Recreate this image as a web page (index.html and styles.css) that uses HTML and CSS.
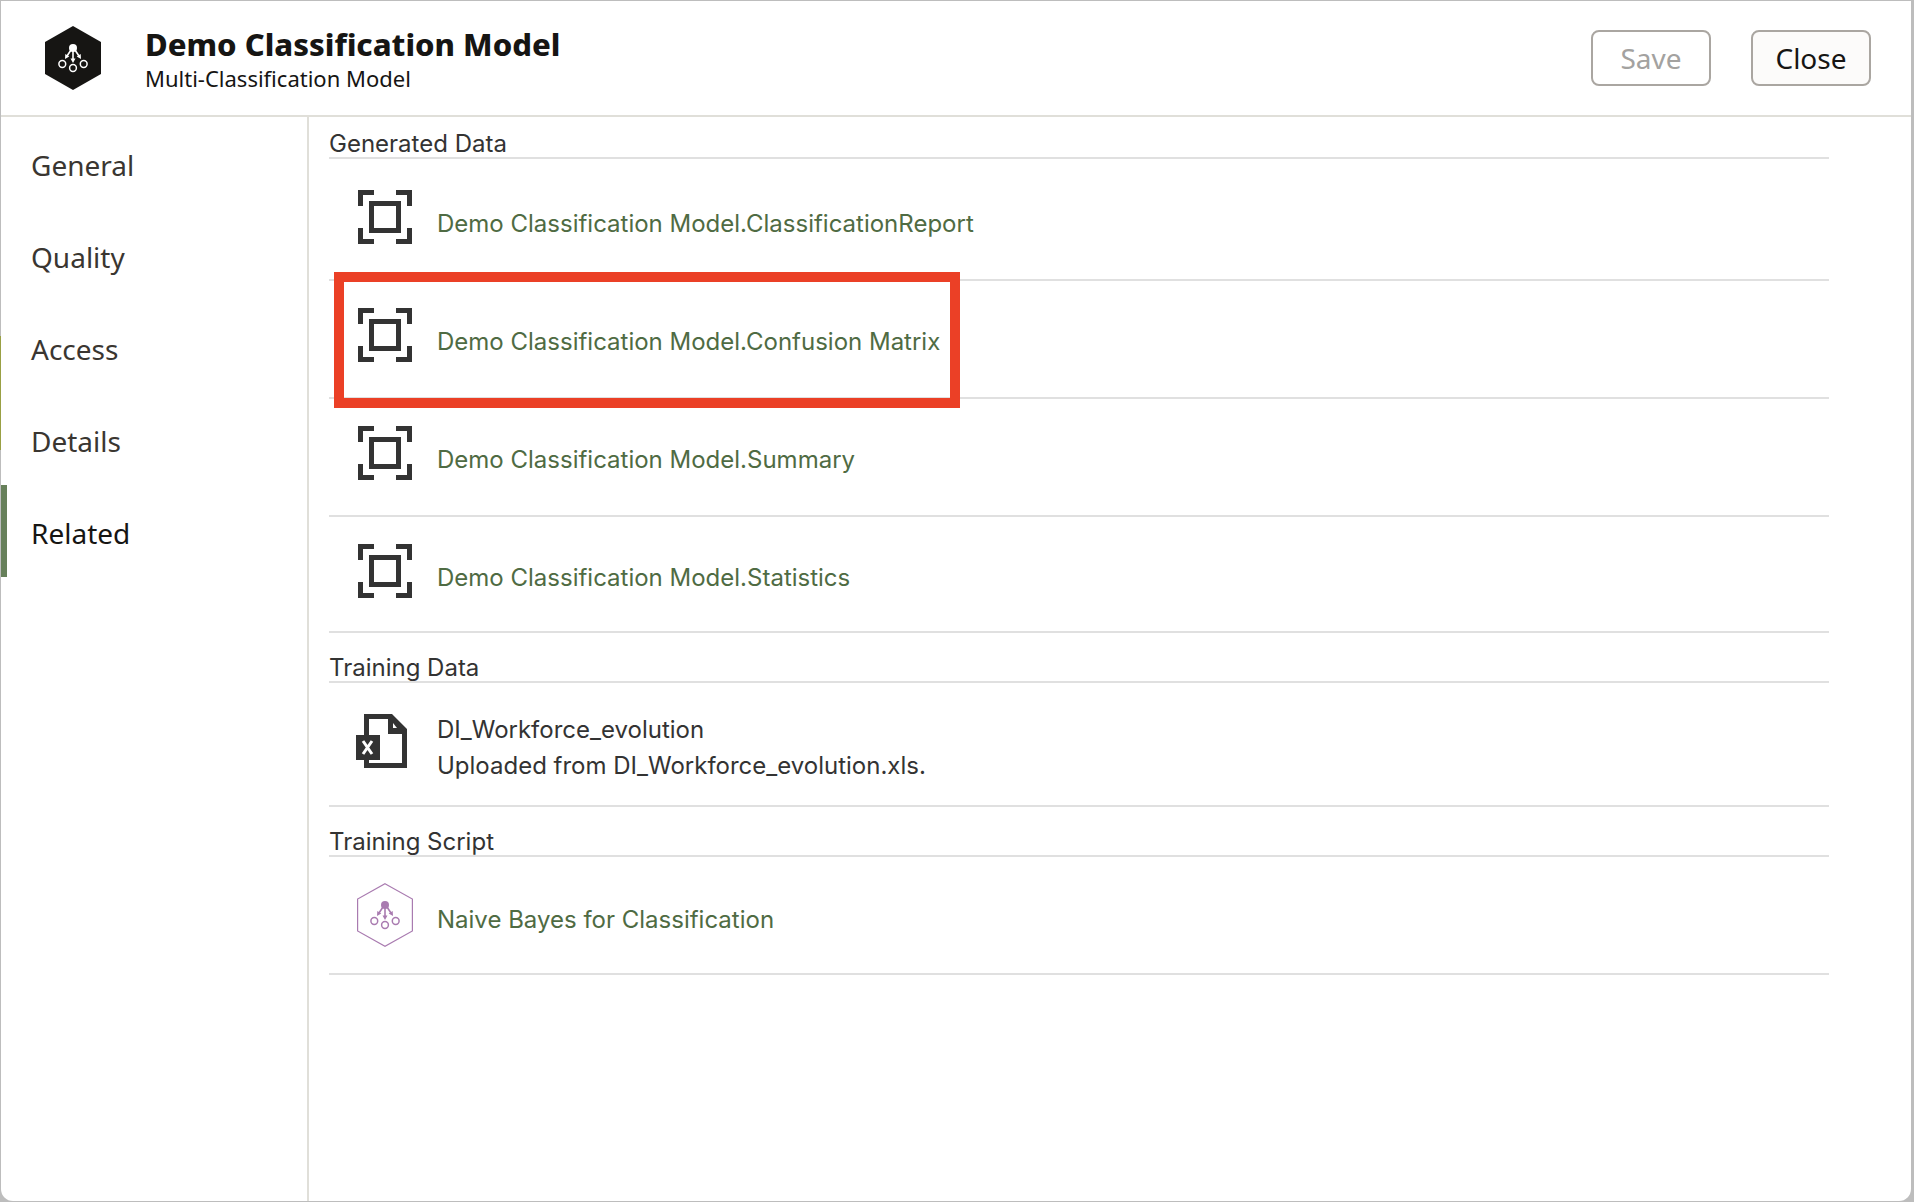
FILE: index.html
```html
<!DOCTYPE html>
<html lang="en">
<head>
<meta charset="utf-8">
<title>Demo Classification Model</title>
<link rel="stylesheet" href="styles.css">
</head>
<body>
<svg class="symbols" aria-hidden="true">
  <symbol id="dataset" viewBox="0 0 54 54">
    <path d="M0 0H16V5H5V16H0ZM38 0H54V16H49V5H38ZM0 38H5V49H16V54H0ZM49 38H54V54H38V49H49Z" fill="currentColor"/>
    <rect x="13.500" y="13.500" width="27" height="27" fill="none" stroke="currentColor" stroke-width="5"/>
  </symbol>
  <symbol id="nodes" viewBox="0 0 56 64">
    <circle cx="28" cy="22" r="4" fill="currentColor"/>
    <path d="M28 24V34M26 24L22 30M30 24L34 30" stroke="currentColor" stroke-width="1.600" fill="none"/>
    <path d="M25.500 32.500H30.500L28 37ZM20.300 28L24.300 30.500L20 33ZM35.700 28L31.700 30.500L36 33Z" fill="currentColor"/>
    <g fill="none" stroke="currentColor" stroke-width="1.500">
      <circle cx="17.300" cy="38" r="3.400"/><circle cx="28" cy="42" r="3.400"/><circle cx="38.700" cy="38" r="3.400"/>
    </g>
  </symbol>
</svg>
<div class="dialog">
  <header class="header">
    <svg class="model-icon" viewBox="0 0 56 64" aria-hidden="true">
      <path d="M28 0L56 16V48L28 64L0 48V16Z" fill="#161513"/>
      <use href="#nodes" color="#fff"/>
    </svg>
    <div class="heading">
      <h1 class="title">Demo Classification Model</h1>
      <p class="subtitle">Multi-Classification Model</p>
    </div>
    <button class="button" type="button" disabled>Save</button>
    <button class="button" type="button">Close</button>
  </header>
  <div class="body">
    <nav class="tabs">
      <a class="tab" href="#general">General</a>
      <a class="tab" href="#quality">Quality</a>
      <a class="tab" href="#access">Access</a>
      <a class="tab" href="#details">Details</a>
      <a class="tab tab-selected" href="#related" aria-current="page">Related</a>
    </nav>
    <main class="content">
      <section>
        <h2 class="section-title">Generated Data</h2>
        <ul class="list">
          <li class="row"><svg class="icon" aria-hidden="true"><use href="#dataset"/></svg><a class="link" href="#report">Demo Classification Model.ClassificationReport</a></li>
          <li class="row row-marked"><svg class="icon" aria-hidden="true"><use href="#dataset"/></svg><a class="link" href="#matrix">Demo Classification Model.Confusion Matrix</a></li>
          <li class="row"><svg class="icon" aria-hidden="true"><use href="#dataset"/></svg><a class="link" href="#summary">Demo Classification Model.Summary</a></li>
          <li class="row"><svg class="icon" aria-hidden="true"><use href="#dataset"/></svg><a class="link" href="#statistics">Demo Classification Model.Statistics</a></li>
        </ul>
      </section>
      <section>
        <h2 class="section-title">Training Data</h2>
        <ul class="list">
          <li class="row row-file">
            <svg class="icon" viewBox="0 0 54 54" aria-hidden="true">
              <path d="M6 0H34L49 15V54H6V46H11V49H44V20H30V5H11V22H6Z" fill="#333"/>
              <path d="M35 9V14H39Z" fill="#fff"/>
              <rect x="-2" y="21" width="24" height="25" fill="#333"/>
              <path d="M5 27L14 40M14 27L5 40" stroke="#fff" stroke-width="3"/>
            </svg>
            <div>DI_Workforce_evolution<br>Uploaded from DI_Workforce_evolution.xls.</div>
          </li>
        </ul>
      </section>
      <section>
        <h2 class="section-title">Training Script</h2>
        <ul class="list">
          <li class="row row-script">
            <svg class="script-icon" viewBox="0 0 56 64" color="#a97bb0" aria-hidden="true">
              <path d="M28 .7L55.400 16V48L28 63.300L.6 48V16Z" fill="none" stroke="currentColor" stroke-width="1.200"/>
              <use href="#nodes"/>
            </svg>
            <a class="link" href="#script">Naive Bayes for Classification</a>
          </li>
        </ul>
      </section>
    </main>
  </div>
</div>
</body>
</html>
```
FILE: styles.css
```css
*, *::after { box-sizing: border-box; }

body {
  margin: 0;
  /* the page behind the dialog, with its olive accent at the left edge */
  background: linear-gradient(#99a044, #99a044) 0 336px / 1px 114px no-repeat #bdbdbd;
  color: #161513;
  font-family: "Noto Sans", sans-serif;
}

h1, h2, p, ul { margin: 0; padding: 0; font-weight: 400; }

.symbols { position: absolute; width: 0; height: 0; }

.dialog {
  display: flex;
  flex-direction: column;
  min-height: calc(100vh - 2px);
  margin: 1px 3px 1px 1px;
  background: #fff;
  border-radius: 0 0 12px 12px;
}

.header {
  display: flex;
  align-items: center;
  gap: 40px;
  height: 116px;
  padding: 0 40px 0 44px;
  border-bottom: 2px solid #e0dfd9;
}

.model-icon { width: 56px; height: 64px; }

.heading { flex: 1; margin-left: 4px; padding-top: 4px; }

.title { font-size: 31px; line-height: 36px; font-weight: 800; }

.subtitle { font-size: 22px; line-height: 32px; }

.button {
  width: 120px;
  height: 56px;
  border: 2px solid #aaa6a1;
  border-radius: 8px;
  background: #fcfbfa;
  color: #161513;
  font: 28px "Noto Sans", sans-serif;
}

.button:disabled { background: #fff; color: #a3a2a0; }

.body { display: flex; flex: 1; }

.tabs { width: 308px; border-right: 2px solid #e0dfd9; }

.tab {
  display: block;
  height: 92px;
  padding-left: 24px;
  border-left: 6px solid transparent;
  color: #3a3631;
  font-size: 28px;
  line-height: 96px;
  text-decoration: none;
}

.tab-selected { border-left-color: #67805a; color: #161513; }

.content {
  flex: 1;
  padding: 0 82px 40px 20px;
  color: #333;
  font: 24px/36px Inter, sans-serif;
}

.section-title {
  height: 50px;
  padding-top: 17px;
  border-bottom: 2px solid #e0e0e0;
  font-size: 24px;
  line-height: 36px;
}

section:first-child .section-title { height: 42px; padding-top: 9px; }

.list { list-style: none; }

.row {
  position: relative;
  display: flex;
  gap: 25px;
  height: 118px;
  padding: 27px 0 0 29px;
  border-bottom: 2px solid #e0e0e0;
}

.row:first-child { height: 122px; padding-top: 31px; }

.row:last-child { height: 116px; }

.row-marked::after {
  content: "";
  position: absolute;
  top: -9px;
  left: 5px;
  width: 626px;
  height: 136px;
  border: 10px solid #eb4026;
}

.icon { flex: none; width: 54px; height: 54px; overflow: visible; }

.link { padding-top: 16px; color: #4f6b43; text-decoration: none; }

.row-file:first-child { height: 124px; padding-top: 29px; }

.row-file .icon { margin-top: 2px; }

.row-script:first-child { gap: 24px; height: 118px; padding: 26px 0 0 28px; }

.row-script .link { padding-top: 19px; }

.script-icon { flex: none; width: 56px; height: 64px; }
```
